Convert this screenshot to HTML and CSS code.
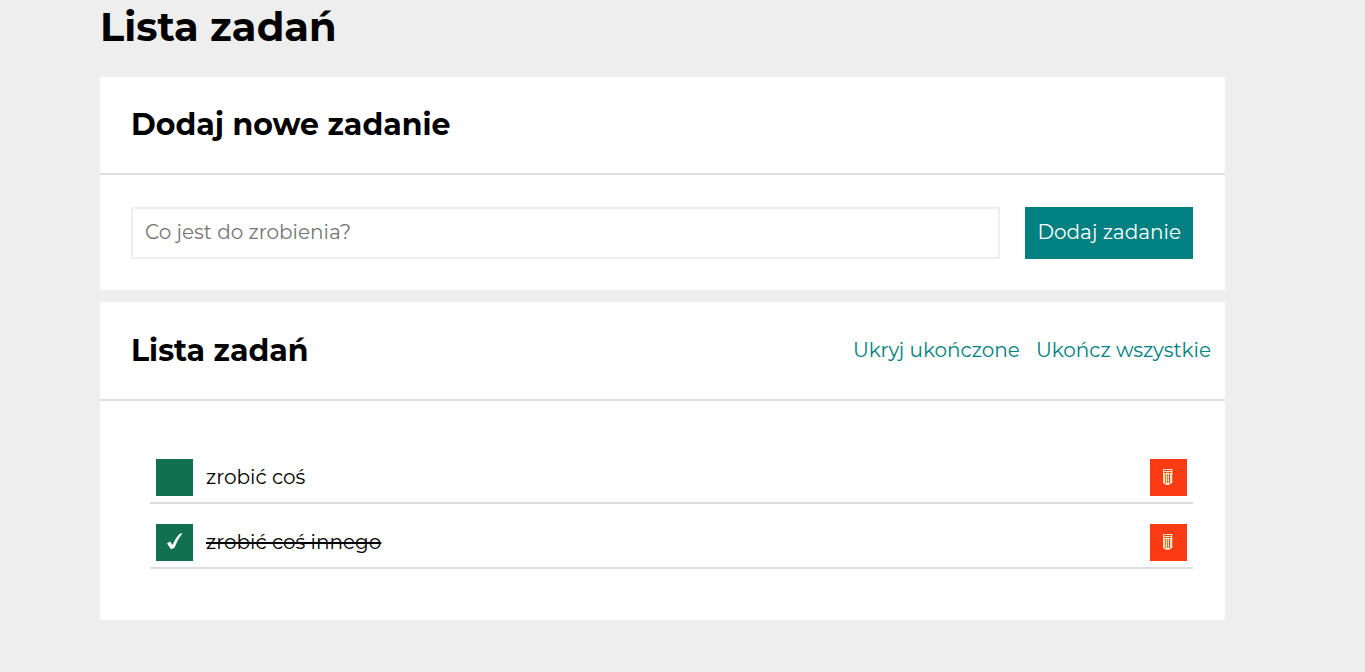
FILE: index.html
```html
<!DOCTYPE html>
<html lang="pl">
<head>
<meta charset="utf-8">
<meta name="viewport" content="width=device-width, initial-scale=1">
<title>Lista zadań</title>
<link rel="stylesheet" href="styles.css">
</head>
<body>
<main class="container">
  <h1 class="title">Lista zadań</h1>
  <section class="section">
    <header class="section-header">
      <h2 class="section-title">Dodaj nowe zadanie</h2>
    </header>
    <form class="form">
      <input class="form-input" type="text" placeholder="Co jest do zrobienia?" aria-label="Co jest do zrobienia?">
      <button class="form-button" type="button">Dodaj zadanie</button>
    </form>
  </section>
  <section class="section">
    <header class="section-header section-header-actions">
      <h2 class="section-title">Lista zadań</h2>
      <div class="actions">
        <button class="action" type="button">Ukryj ukończone</button>
        <button class="action" type="button">Ukończ wszystkie</button>
      </div>
    </header>
    <ul class="tasks">
      <li class="task">
        <span class="toggle">
          <input class="toggle-input" type="checkbox" id="task-1">
          <svg class="toggle-mark" viewBox="0 0 37 37" aria-hidden="true"><path d="M11 19.500l3-2 2.600 3.500c2-5 4.400-8.600 7.500-11.500h2.400c-3.800 4.500-6.200 9.500-8.000 14.300l-3.500 1.400z"/></svg>
        </span>
        <label class="task-text" for="task-1">zrobić coś</label>
        <button class="remove" type="button" aria-label="Usuń zadanie">
          <svg class="remove-icon" viewBox="0 0 10 16" aria-hidden="true"><path fill="#f3dfc5" d="M0 0h9l1 1v3l-1 1v9l-2 1-1 1H3l-1-1-2-1z"/><path fill="#fa3c14" d="M1 1h7v1H1zM1 3h2v1H1zM6 3h2v1H6zM6 5h1v9H6z"/><path fill="#d98228" d="M3 3h3v1H3zM2 5h1v9H2zM4 5h1v9H4zM9 1h1v3H9zM9 5h1v9H9z"/></svg>
        </button>
      </li>
      <li class="task">
        <span class="toggle">
          <input class="toggle-input" type="checkbox" id="task-2" checked>
          <svg class="toggle-mark" viewBox="0 0 37 37" aria-hidden="true"><path d="M11 19.500l3-2 2.600 3.500c2-5 4.400-8.600 7.500-11.500h2.400c-3.800 4.500-6.200 9.500-8.000 14.300l-3.500 1.400z"/></svg>
        </span>
        <label class="task-text task-text-done" for="task-2">zrobić coś innego</label>
        <button class="remove" type="button" aria-label="Usuń zadanie">
          <svg class="remove-icon" viewBox="0 0 10 16" aria-hidden="true"><path fill="#f3dfc5" d="M0 0h9l1 1v3l-1 1v9l-2 1-1 1H3l-1-1-2-1z"/><path fill="#fa3c14" d="M1 1h7v1H1zM1 3h2v1H1zM6 3h2v1H6zM6 5h1v9H6z"/><path fill="#d98228" d="M3 3h3v1H3zM2 5h1v9H2zM4 5h1v9H4zM9 1h1v3H9zM9 5h1v9H9z"/></svg>
        </button>
      </li>
    </ul>
  </section>
</main>
</body>
</html>
```
FILE: styles.css
```css
*,
*::before,
*::after {
  box-sizing: border-box;
}

body {
  margin: 0;
  background: #eee;
  color: #000;
  font-family: Montserrat, Inter, "Open Sans", sans-serif;
  font-size: 20px;
  font-weight: 400;
  line-height: 24px;
}

button,
input {
  margin: 0;
  font: inherit;
}

button {
  border: 0;
  cursor: pointer;
}

.container {
  margin: 0 140px 0 100px;
}

.title {
  margin: 0;
  padding: 2px 0 25px;
  font-size: 40px;
  font-weight: 700;
  line-height: 50px;
}

.section {
  margin-bottom: 12px;
  background: #fff;
}

.section-header {
  padding: 30px 31px;
  border-bottom: 2px solid #ddd;
}

.section-header-actions {
  display: flex;
  align-items: center;
  justify-content: space-between;
  padding: 31px 14px 30px 31px;
}

.section-title {
  margin: 0;
  font-size: 30px;
  font-weight: 700;
  line-height: 36px;
}

.form {
  display: flex;
  gap: 25px;
  padding: 32px 32px 31px 31px;
}

.form-input {
  flex: 1;
  min-width: 0;
  padding: 11px 12px 13px;
  border: 2px solid #eee;
  background: #fff;
}

.form-input::placeholder {
  color: #757575;
  opacity: 1;
}

.form-button {
  padding: 13px 12px 15px 13px;
  background: teal;
  color: #fff;
}

.actions {
  display: flex;
  gap: 16px;
}

.action {
  padding: 0 0 2px;
  background: none;
  color: teal;
}

.tasks {
  margin: 0;
  padding: 52px 32px 51px 50px;
  list-style: none;
}

.task {
  display: flex;
  align-items: center;
  padding: 6px;
  border-bottom: 2px solid #ddd;
}

.task + .task {
  margin-top: 14px;
}

.toggle {
  display: grid;
  width: 37px;
  height: 37px;
}

.toggle-input {
  grid-area: 1 / 1;
  width: 100%;
  height: 100%;
  appearance: none;
  background: #107050;
  cursor: pointer;
}

.toggle-mark {
  grid-area: 1 / 1;
  width: 100%;
  height: 100%;
  fill: #fff;
  pointer-events: none;
  visibility: hidden;
}

.toggle-input:checked + .toggle-mark {
  visibility: visible;
}

.task-text {
  flex: 1;
  padding: 0 13px 2px;
}

.task-text-done {
  text-decoration: line-through;
  text-decoration-thickness: 2px;
}

.remove {
  display: flex;
  align-items: center;
  width: 37px;
  height: 37px;
  padding: 0 0 1px 13px;
  background: #fc3a14;
}

.remove-icon {
  width: 10px;
  height: 16px;
}
```
